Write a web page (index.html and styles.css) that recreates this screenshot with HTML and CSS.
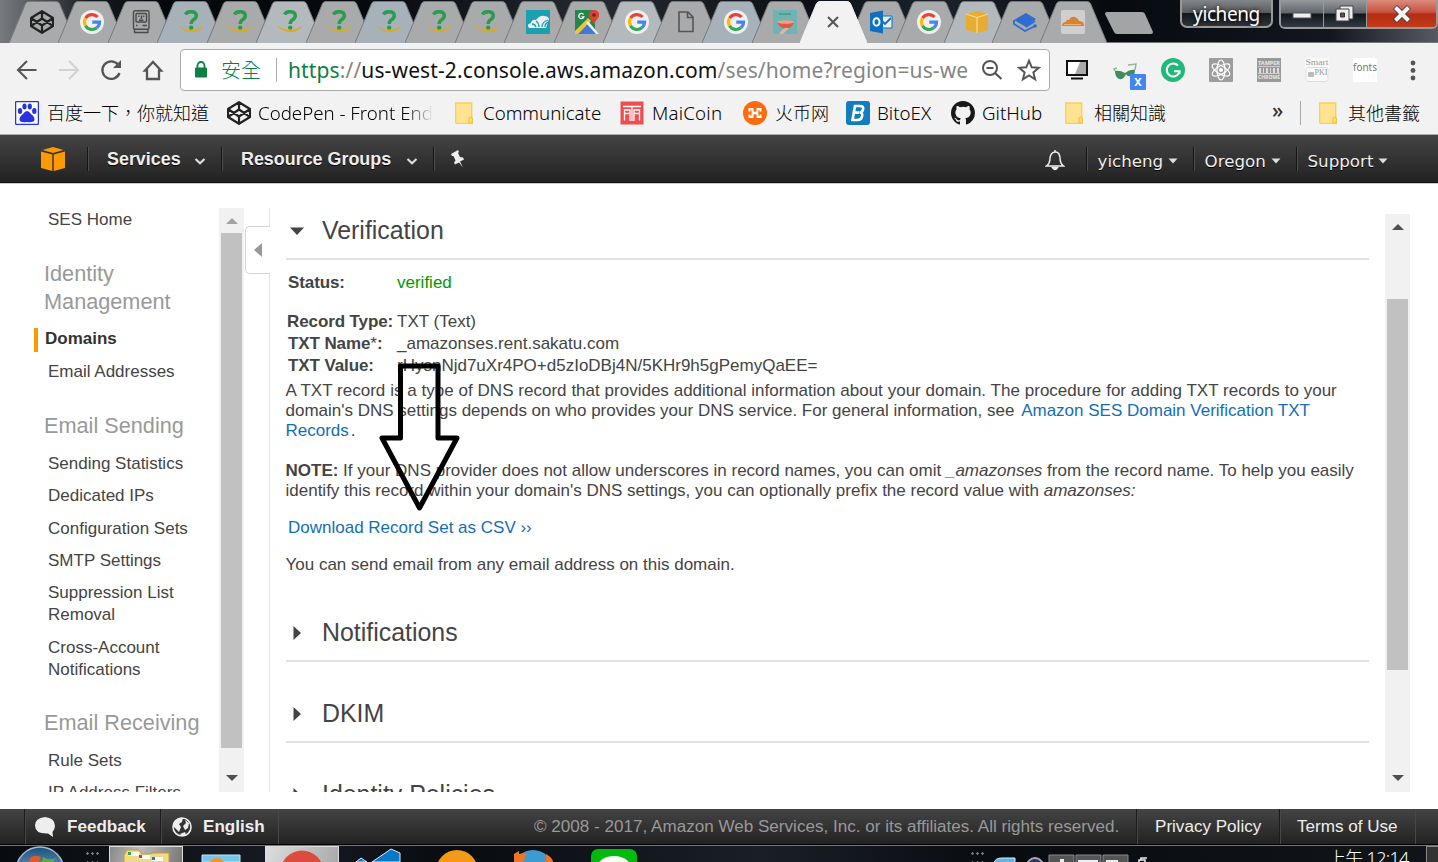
FILE: index.html
```html
<!DOCTYPE html>
<html lang="zh-Hant">
<head>
<meta charset="utf-8">
<title>SES Management Console</title>
<link rel="stylesheet" href="styles.css">
</head>
<body>
<svg class="defs" width="0" height="0">
  <symbol id="tab" viewBox="0 0 67 42"><path d="M0 42 L16.5 2.500 Q17.500 .5 20 .5 H47 Q49.500 .5 50.500 2.500 L67 42"/></symbol>
  <symbol id="codepen" viewBox="0 0 24 24"><path d="M12 1.200 23 8v8L12 22.800 1 16V8zM1 8 12 15.500 23 8M1 16 12 8.500 23 16M12 1.200v7.300M12 15.500v7.300" fill="none" stroke="#222" stroke-width="2.200" stroke-linejoin="round"/></symbol>
  <symbol id="google" viewBox="0 0 24 24"><circle cx="12" cy="12" r="12" fill="#f0f0f0"/><g fill="none" stroke-width="3.200"><path d="M17.600 7A7.600 7.600 0 0 0 5.500 8.200" stroke="#ea4335"/><path d="M5.500 8.200a7.600 7.600 0 0 0 0 7.600" stroke="#fbbc05"/><path d="M5.500 15.800a7.600 7.600 0 0 0 11.300 2" stroke="#34a853"/><path d="M16.800 17.800A7.600 7.600 0 0 0 19.500 12.200H12.300" stroke="#4285f4"/></g></symbol>
  <symbol id="question" viewBox="0 0 24 24"><path d="M6.500 4.500Q8 1.700 12 1.700q5.300 0 5.300 4 0 2.300-2.900 4.200Q12.200 11.400 12.200 14" fill="none" stroke="#2a9d4c" stroke-width="3.500"/><circle cx="12.200" cy="17.600" r="2.200" fill="#2a9d4c"/><path d="M.5 16.800q11 8 23 0-10 10-23 0z" fill="#e0aa14" stroke="#e0aa14"/></symbol>
  <symbol id="folder" viewBox="0 0 18 22"><path d="M.7 1h16v15.500l.7 1v3.800H1.500Q.7 21.300.7 20z" fill="#ffe390" stroke="#f7cf58" stroke-width="1.300"/><path d="M14 21v-5q1.500-2 3.300 0v5z" fill="#ffdf7a" stroke="#efbd32"/></symbol>
  <symbol id="mac" viewBox="0 0 24 24"><g fill="none" stroke="#4b4b4b" stroke-width="1.400"><rect x="4.500" y=".7" width="15.500" height="18.500" rx="1.500"/><path d="M5.500 19.200v3.300h13.500v-3.300"/><rect x="7" y="3.500" width="10.500" height="8.500" rx="1"/><path d="M9.800 5.500v1.500M14.700 5.500v1.500M12.500 5.500v2.800h-1M10 9.800q2.200 1 4.400 0M13.500 15.500h4.500M7 15.500h1.500"/></g></symbol>
  <symbol id="caret" viewBox="0 0 12 12"><path d="M1.500 4 6 8.200 10.500 4" fill="none" stroke="#ddd" stroke-width="2.200"/></symbol>
  <symbol id="drop" viewBox="0 0 10 8"><path d="M.5 1.500h9L5 6.500z" fill="#ddd"/></symbol>
  <symbol id="tri" viewBox="0 0 12 6"><path d="M0 6h12L6 0z"/></symbol>
</svg>

<header class="titlebar">
  <div class="tabs">
    <div class="tab"><svg class="shape"><use href="#tab"/></svg><svg class="fav"><use href="#codepen"/></svg></div>
    <div class="tab"><svg class="shape"><use href="#tab"/></svg><svg class="fav"><use href="#google"/></svg></div>
    <div class="tab"><svg class="shape"><use href="#tab"/></svg><svg class="fav"><use href="#mac"/></svg></div>
    <div class="tab tint"><svg class="shape"><use href="#tab"/></svg><svg class="fav"><use href="#question"/></svg></div>
    <div class="tab"><svg class="shape"><use href="#tab"/></svg><svg class="fav"><use href="#question"/></svg></div>
    <div class="tab pale"><svg class="shape"><use href="#tab"/></svg><svg class="fav"><use href="#question"/></svg></div>
    <div class="tab"><svg class="shape"><use href="#tab"/></svg><svg class="fav"><use href="#question"/></svg></div>
    <div class="tab tint"><svg class="shape"><use href="#tab"/></svg><svg class="fav"><use href="#question"/></svg></div>
    <div class="tab"><svg class="shape"><use href="#tab"/></svg><svg class="fav"><use href="#question"/></svg></div>
    <div class="tab"><svg class="shape"><use href="#tab"/></svg><svg class="fav"><use href="#question"/></svg></div>
    <div class="tab"><svg class="shape"><use href="#tab"/></svg><svg class="fav" viewBox="0 0 24 24"><path fill="#1ba0b2" d="M0 0h24v24H0z"/><path d="M3 18q-3-4 2-5 1-4 5-3 4-5 8-4 4 0 5 3l-3 9z" fill="#eee"/><path d="M10 17q-1-3-4-3M13 17q0-4-3-6M16 17q0-5 6-7M19 17q0-4 4-5" fill="none" stroke="#1ba0b2" stroke-width="1.300"/></svg></div>
    <div class="tab"><svg class="shape"><use href="#tab"/></svg><svg class="fav" viewBox="0 0 24 24"><path fill="#23864b" d="M0 0h20v24H0z"/><path d="M0 21 13 8l3 3L4 24H0z" fill="#e9c53b"/><path d="m3 24 10-10 8 10z" fill="#4478d8"/><path d="m13 11 11 13h-3L11 13z" fill="#eee"/><path d="M19 15q-1-4-4-7a5 5 0 1 1 8 0q-3 3-4 7z" fill="#d94332"/><circle cx="19" cy="5" r="1.800" fill="#7b2018"/><path d="M8.500 4.500a2.600 2.600 0 1 0 .3 2.500H6.500" fill="none" stroke="#fff" stroke-width="1.300"/></svg></div>
    <div class="tab pale"><svg class="shape"><use href="#tab"/></svg><svg class="fav"><use href="#google"/></svg></div>
    <div class="tab"><svg class="shape"><use href="#tab"/></svg><svg class="fav" viewBox="0 0 24 24"><path d="M5 2h9l5 5v14.500H5zM13.500 2v5.500H19" fill="none" stroke="#555" stroke-width="1.600"/></svg></div>
    <div class="tab tint"><svg class="shape"><use href="#tab"/></svg><svg class="fav"><use href="#google"/></svg></div>
    <div class="tab last"><svg class="shape"><use href="#tab"/></svg><svg class="fav" viewBox="0 0 24 24"><path fill="#70b3b4" d="M0 0h24v24H0z"/><path d="M6 4h12" stroke="#3b9c78" stroke-width="1.400"/><path d="M4 12h17q-2 6.500-8 6.500T4 12z" fill="#dd5941"/><ellipse cx="12.500" cy="12" rx="8.500" ry="1.800" fill="#eda08a"/><path d="m6 24 3-4 3-2h4l-6 6z" fill="#e2b598"/></svg></div>
    <div class="tab late active"><svg class="shape"><use href="#tab"/></svg><svg class="fav" viewBox="0 0 24 24"><path d="m7 7 10 10m0-10L7 17" stroke="#555" stroke-width="2"/></svg></div>
    <div class="tab late"><svg class="shape"><use href="#tab"/></svg><svg class="fav" viewBox="0 0 24 24"><path d="M11 6h12v12H11z" fill="#e8eef3" stroke="#0d70c0"/><path d="m13 11 3 3 6-6" fill="none" stroke="#0d70c0" stroke-width="1.800"/><path d="M1 3 14 .5v23L1 21z" fill="#0d70c0"/><ellipse cx="7.500" cy="12" rx="3" ry="3.800" fill="none" stroke="#fff" stroke-width="2"/></svg></div>
    <div class="tab late"><svg class="shape"><use href="#tab"/></svg><svg class="fav"><use href="#google"/></svg></div>
    <div class="tab late pale"><svg class="shape"><use href="#tab"/></svg><svg class="fav" viewBox="0 0 24 24"><path d="m1 4 11-3 11 3v16l-11 3-11-3z" fill="#e7ad32"/><path d="m1 4 11 3.500L23 4M12 7.500V23" fill="none" stroke="#f4d78c" stroke-width="1.300"/></svg></div>
    <div class="tab late"><svg class="shape"><use href="#tab"/></svg><svg class="fav" viewBox="0 0 24 24"><path d="m1 10 12-7 10 6-10 8z" fill="#2f6bd0"/><path d="M1 10v4l11 7 10-5M13 17l9-6" fill="none" stroke="#2f6bd0" stroke-width="1.800"/><circle cx="22" cy="16" r="1.800" fill="#2f6bd0"/></svg></div>
    <div class="tab late"><svg class="shape"><use href="#tab"/></svg><svg class="fav" viewBox="0 0 24 24"><rect width="24" height="24" rx="2" fill="#cfcfcf"/><path d="M1 16q0-4 4-4 0-3 3-2 2-4 6-3 3 1 4 4 5 0 5 5z" fill="#d9822f"/><path d="M3 14.500h17" stroke="#f3c08c" stroke-width=".8"/></svg></div>
    <svg class="newtab" viewBox="0 0 48 22"><path d="M2 0h35q2 0 3 2l8 18q0 2-2 2H12q-2 0-3-2L0 2q0-2 2-2z" fill="#a3a4a6"/></svg>
  </div>
  <div class="user">yicheng</div>
  <div class="controls">
    <div class="ctl"><svg width="20" height="10"><rect x="1" y="4" width="18" height="5" fill="#eee" stroke="#555"/></svg></div>
    <div class="ctl"><svg width="22" height="20"><path d="M6 2h13v13H6z" fill="#eee" stroke="#444"/><path d="M2 5h13v12H2z" fill="#eee" stroke="#444"/><path d="M6.500 9h4v4h-4z" fill="#555" stroke="#333"/></svg></div>
    <div class="ctl close"><svg width="20" height="18"><path d="m3 2 14 14M17 2 3 16" stroke="#534040" stroke-width="6"/><path d="m3.500 2.500 13 13M16.500 2.500l-13 13" stroke="#f4f4f4" stroke-width="4"/></svg></div>
  </div>
</header>

<div class="toolbar">
  <svg class="nav" viewBox="0 0 24 24"><path d="M21.500 12H3.500M12 3 3 12l9 9" fill="none" stroke="#555" stroke-width="2.100"/></svg>
  <svg class="nav" viewBox="0 0 24 24"><path d="M2 12h18M12 3l9 9-9 9" fill="none" stroke="#d2d2d2" stroke-width="2.100"/></svg>
  <svg class="nav" viewBox="0 0 24 24"><path d="M19 6.500A8.800 8.800 0 1 0 20.500 15" fill="none" stroke="#555" stroke-width="2.300"/><path d="M22 2v8h-8z" fill="#555"/></svg>
  <svg class="nav" viewBox="0 0 24 24"><path d="M4 12.500 12 4l8 8.500h-2v8.500H6v-8.500z" fill="none" stroke="#555" stroke-width="2.300"/></svg>
  <div class="omnibox">
    <svg class="lock" viewBox="0 0 14 17"><path d="M3.500 8V4.500a3.500 3.500 0 0 1 7 0V8" fill="none" stroke="#0b8043" stroke-width="1.800"/><rect x="1" y="6.500" width="12" height="10" rx="1" fill="#0b8043"/></svg>
    <span class="secure">安全</span>
    <span class="url"><span class="scheme">https</span>://<span class="host">us-west-2.console.aws.amazon.com</span>/ses/home?region=us-we</span>
    <svg class="zoomout" viewBox="0 0 22 22"><circle cx="9" cy="9" r="7" fill="none" stroke="#555" stroke-width="2"/><path d="m14 14 6.500 6M5.500 9h7" stroke="#555" stroke-width="2.200"/></svg>
    <svg class="star" viewBox="0 0 22 22"><path d="m11 2.500 2.500 6 6.500.5-5 4.200 1.600 6.300L11 16l-5.600 3.500L7 13.200 2 9l6.500-.5z" fill="none" stroke="#555" stroke-width="1.800"/></svg>
  </div>
  <div class="extensions">
    <svg viewBox="0 0 24 24"><path d="M2 3h20v14H2z" fill="#fff" stroke="#111" stroke-width="2"/><path d="m15 4-5 12h11V4z" fill="#aaa"/><path d="M6 20.500h12" stroke="#111" stroke-width="2"/></svg>
    <svg class="glasses" viewBox="0 0 34 32"><path d="M2 13q5-1 10 2 5-4 10-3 0 6-4 6-4 1-5-2-2 6-7 5-4-2-4-8z" fill="#418b5c"/><path d="m2 13-1-2 3-1M22 12l1-6-8 1" fill="none" stroke="#8eb79b" stroke-width="1.500"/><rect x="17" y="16" width="16" height="16" rx="1" fill="#4285f4"/><text x="25" y="28" class="badge">X</text></svg>
    <svg viewBox="0 0 24 24"><circle cx="12" cy="12" r="12" fill="#1fb978"/><path d="M17 7.500a6.500 6.500 0 1 0 1 7.500M13 13.200h5.500V16" fill="none" stroke="#fff" stroke-width="2.100"/></svg>
    <svg viewBox="0 0 24 24"><rect width="24" height="24" rx="1" fill="#9d9d9d"/><g fill="none" stroke="#fff" stroke-width="1.200"><ellipse cx="12" cy="12" rx="4" ry="10"/><ellipse cx="12" cy="12" rx="4" ry="10" transform="rotate(60 12 12)"/><ellipse cx="12" cy="12" rx="4" ry="10" transform="rotate(120 12 12)"/></g><circle cx="12" cy="12" r="2" fill="#fff"/></svg>
    <svg viewBox="0 0 24 24"><path fill="#999" d="M0 0h24v24H0z"/><path d="M1 8.500h22M1 15.500h22" stroke="#ddd" stroke-width=".8"/><path d="M2 10h2v5H2zM6 10h1v5H6zM9 10h2v5H9zM13 10h1v5h-1zM16 10h2v5h-2zM20 10h2v5h-2z" fill="#ddd"/><text x="12" y="7" class="micro" textLength="22" lengthAdjust="spacingAndGlyphs">TAMPER</text><text x="12" y="20.500" class="micro" textLength="22" lengthAdjust="spacingAndGlyphs">CHROME</text></svg>
    <svg viewBox="0 0 24 24"><path fill="#fafafa" d="M0 0h24v24H0z"/><text x="12" y="6.500" class="smart" textLength="23" lengthAdjust="spacingAndGlyphs">Smart</text><rect x="1" y="9.500" width="22" height="14" rx="2" fill="none" stroke="#ddd"/><rect x="3" y="14" width="6" height="5" rx="1" fill="#bbb"/><text x="16" y="17" class="smart" textLength="13" lengthAdjust="spacingAndGlyphs">PKI</text></svg>
    <svg viewBox="0 0 24 24"><path fill="#fff" d="M0 0h24v24H0z"/><text x="12" y="13" class="fonts" textLength="24">fonts</text></svg>
    <svg viewBox="0 0 24 24"><g fill="#555"><circle cx="12" cy="5" r="2.400"/><circle cx="12" cy="12.500" r="2.400"/><circle cx="12" cy="20" r="2.400"/></g></svg>
  </div>
</div>

<nav class="bookmarks">
  <a class="bm b1"><svg viewBox="0 0 24 24"><rect x=".6" y=".6" width="22.800" height="22.800" rx="1" fill="#fff" stroke="#2932e1" stroke-width="1.300"/><g fill="#2932e1"><ellipse cx="5" cy="10" rx="2.200" ry="3"/><ellipse cx="9.500" cy="5.500" rx="2.100" ry="3"/><ellipse cx="14.800" cy="5.500" rx="2.100" ry="3"/><ellipse cx="19.300" cy="10" rx="2.200" ry="3"/><path d="M12 10q2 0 4 3 4 3 3.500 6-1 3-7.500 2-6.500 1-7.500-2-.5-3 3.500-6 2-3 4-3z"/></g></svg><span>百度一下，你就知道</span></a>
  <a class="bm b2"><svg viewBox="0 0 24 24"><use href="#codepen"/></svg><span>CodePen - Front End</span></a>
  <a class="bm b3"><svg class="fold"><use href="#folder"/></svg><span>Communicate</span></a>
  <a class="bm b4"><svg viewBox="0 0 24 24"><path fill="#ee4e50" d="M.5.500h23v23H.5z"/><path d="M3 5.500h18M4.500 19.500V9h5.500v3.500H4.500M14 20V9h5.500v10.500M14 12.500h5.500M10 9v11M12 5.500V20" fill="none" stroke="#fff" stroke-width="1.300"/></svg><span>MaiCoin</span></a>
  <a class="bm b5"><svg viewBox="0 0 24 24"><circle cx="12" cy="12" r="12" fill="#ff6a0d"/><path d="M5.500 8h4v3l2.500 1 2.500-1V8h4M5.500 16h4v-3l2.500-1 2.500 1v3h4M6.500 8v2.500M17.500 8v2.500M6.500 16v-2.500M17.500 16v-2.500" fill="none" stroke="#fff" stroke-width="1.900"/></svg><span>火币网</span></a>
  <a class="bm b6"><svg viewBox="0 0 24 24"><rect width="24" height="24" rx="3" fill="#117dbd"/><path d="M9 5h5q4 0 3 3.500-.5 2.500-3 3 3 .5 2 4-.8 3.500-4.500 3.500H6.500zM8.800 11.700h4.500" fill="none" stroke="#fff" stroke-width="2.700"/></svg><span>BitoEX</span></a>
  <a class="bm b7"><svg viewBox="0 0 16 16"><path fill="#191717" d="M8 0C3.580 0 0 3.580 0 8c0 3.540 2.290 6.530 5.470 7.590.4.070.55-.17.55-.38 0-.19-.01-.82-.01-1.490-2.010.37-2.530-.49-2.690-.94-.09-.23-.48-.94-.82-1.130-.28-.15-.68-.52-.01-.53.63-.01 1.080.58 1.230.82.72 1.210 1.870.87 2.330.66.070-.52.280-.87.510-1.070-1.780-.2-3.640-.89-3.640-3.950 0-.87.310-1.590.82-2.150-.08-.2-.36-1.020.08-2.120 0 0 .67-.21 2.200.82a7.600 7.600 0 0 1 4 0c1.530-1.040 2.200-.82 2.200-.82.44 1.100.16 1.920.08 2.120.51.56.82 1.270.82 2.150 0 3.070-1.870 3.750-3.650 3.950.29.25.54.73.54 1.480 0 1.070-.01 1.930-.01 2.200 0 .21.15.46.55.38A8 8 0 0 0 16 8c0-4.420-3.580-8-8-8z"/></svg><span>GitHub</span></a>
  <a class="bm b8"><svg class="fold"><use href="#folder"/></svg><span>相關知識</span></a>
  <span class="more">»</span>
  <a class="bm b9"><svg class="fold"><use href="#folder"/></svg><span>其他書籤</span></a>
</nav>

<div class="awsnav">
  <div class="seg cube"><svg width="26" height="26" viewBox="0 0 26 26"><path d="M1 5.500 12.300 8.500V25L1 22zM25 5.500 13.700 8.500V25L25 22zM2.500 4 13 1l10.500 3L13 7z" fill="#f90"/></svg></div>
  <div class="seg services">Services<svg class="caret"><use href="#caret"/></svg></div>
  <div class="seg groups">Resource Groups<svg class="caret"><use href="#caret"/></svg></div>
  <div class="seg pin"><svg width="16" height="18" viewBox="0 0 16 18"><path d="m1 4 7-4 1 2-1 1 2 4 3 .5 1 2-4 2 3 6-4-5-4 2-1-2 1.500-2L3.500 6 2 6z" fill="#eee"/></svg></div>
  <div class="right">
    <svg class="bell" viewBox="0 0 20 22"><path d="M1.500 17q3-2 3.300-6Q5 3.500 10 3t5.200 8q.3 4 3.300 6z" fill="none" stroke="#eee" stroke-width="1.500"/><path d="M10 1v2M7.500 18.500h5q-2.500 4-5 0z" stroke="#eee" stroke-width="1.500" fill="#eee"/></svg>
    <div class="item i1">yicheng<svg class="drop"><use href="#drop"/></svg></div>
    <div class="item i2">Oregon<svg class="drop"><use href="#drop"/></svg></div>
    <div class="item i3">Support<svg class="drop"><use href="#drop"/></svg></div>
  </div>
</div>

<div class="page">
  <aside class="sidebar">
    <a class="link">SES Home</a>
    <h2>Identity<br>Management</h2>
    <a class="link current">Domains</a>
    <a class="link">Email Addresses</a>
    <h2>Email Sending</h2>
    <a class="link">Sending Statistics</a>
    <a class="link">Dedicated IPs</a>
    <a class="link">Configuration Sets</a>
    <a class="link">SMTP Settings</a>
    <a class="link two">Suppression List<br>Removal</a>
    <a class="link two">Cross-Account<br>Notifications</a>
    <h2 class="recv">Email Receiving</h2>
    <a class="link">Rule Sets</a>
    <a class="link">IP Address Filters</a>
  </aside>
  <div class="scroll side"><svg class="up dim"><use href="#tri"/></svg><div class="thumb"></div><svg class="down"><use href="#tri"/></svg></div>
  <div class="gutter"><div class="collapse"><svg width="8" height="14"><path d="M8 0v14L0 7z" fill="#999"/></svg></div></div>
  <main class="main">
    <h1><svg class="tw" viewBox="0 0 14 14"><path d="M0 3.500h14L7 11z"/></svg>Verification</h1>
    <dl class="status"><dt>Status:</dt><dd class="ok">verified</dd></dl>
    <dl class="records">
      <dt class="rt">Record Type:</dt><dd>TXT (Text)</dd>
      <dt>TXT Name<i>*</i>:</dt><dd>_amazonses.rent.sakatu.com</dd>
      <dt>TXT Value:</dt><dd class="value">rHysnNjd7uXr4PO+d5zIoDBj4N/5KHr9h5gPemyQaEE=</dd>
    </dl>
    <p><span class="wide">A TXT record is a type of DNS record that provides additional information about your domain. The procedure for adding TXT records to your</span><br>domain's DNS settings depends on who provides your DNS service. For general information, see <a class="guide">Amazon SES Domain Verification TXT</a><br><a>Records</a><span class="stop">.</span></p>
    <p class="note"><b>NOTE:</b> If your DNS provider does not allow underscores in record names, you can omit <em>_amazonses</em> from the record name. To help you easily<br>identify this record within your domain's DNS settings, you can optionally prefix the record value with <em>amazonses:</em></p>
    <p class="download"><a>Download Record Set as CSV ››</a></p>
    <p class="send">You can send email from any email address on this domain.</p>
    <h1 class="sec"><svg class="tw" viewBox="0 0 14 14"><path d="M3.500 0v14L11 7z"/></svg>Notifications</h1>
    <h1 class="sec dkim"><svg class="tw" viewBox="0 0 14 14"><path d="M3.500 0v14L11 7z"/></svg>DKIM</h1>
    <h1 class="sec pol"><svg class="tw" viewBox="0 0 14 14"><path d="M3.500 0v14L11 7z"/></svg>Identity Policies</h1>
  </main>
  <div class="scroll body"><svg class="up"><use href="#tri"/></svg><div class="thumb"></div><svg class="down"><use href="#tri"/></svg></div>
  <svg class="arrow" viewBox="0 0 84 152"><path d="M22.500 5H60v72h19L41.500 147 4 77h18.500z" fill="none" stroke="#000" stroke-width="5" stroke-linejoin="round"/></svg>
</div>

<footer class="footer">
  <div class="fseg fb"><svg width="22" height="22" viewBox="0 0 22 22"><path d="M11 1q10 1 10 9 0 3-2.500 6l.5 5-5-3.500Q1 18 1 9.500 1 2 11 1z" fill="#eee"/></svg>Feedback</div>
  <div class="fseg lang"><svg width="20" height="20" viewBox="0 0 20 20"><circle cx="10" cy="10" r="9" fill="#333" stroke="#eee" stroke-width="1.600"/><path d="M2 5q4-5 9-4l-1 4-3 2 2 3-2 5-4-4-2-2zM13 3l4 3-1 5-3 2-2-4 3-3zM8 17l5-2 1 3-4 1z" fill="#eee"/></svg>English</div>
  <span class="copy">© 2008 - 2017, Amazon Web Services, Inc. or its affiliates. All rights reserved.</span>
  <div class="fseg privacy">Privacy Policy</div>
  <div class="fseg terms">Terms of Use</div>
</footer>

<div class="taskbar">
  <svg class="start" viewBox="0 0 50 16"><defs><linearGradient id="orb" x2="0" y2="1"><stop stop-color="#1a5080"/><stop offset="1" stop-color="#b3d8ea"/></linearGradient></defs><circle cx="25" cy="25" r="24" fill="url(#orb)" stroke="#a6bac8" stroke-width="1.500"/><path d="M14 16q1-9 12-5l-2 5z" fill="#e05a28"/><path d="m28 11q6 4 13 1l-3 4H27z" fill="#65a83a"/></svg>
  <span class="grip"></span>
  <div class="task lit"><svg viewBox="0 0 50 16"><path d="M3 16V8l3-5h12l3 4h8l3-1h16v10z" fill="#f2d98a" stroke="#c49d3b"/><path d="M7 5h11v4H7zM18 8h11v4H18zM31 10h11v4H31z" fill="#fff"/><path d="M7 5h3v3H7z" fill="#3a3"/><path d="M18 8h3v3h-3z" fill="#d32"/><path d="M31 10h3v3h-3z" fill="#27c"/></svg></div>
  <div class="task"><svg viewBox="0 0 50 16"><path d="M5 9h38v7H5z" fill="#79c5e6" stroke="#bce8f7"/><circle cx="20" cy="20" r="8" fill="#f29428"/></svg></div>
  <div class="task lit strong"><svg viewBox="0 0 50 16"><circle cx="25" cy="25" r="21.500" fill="#dd4b3e"/></svg></div>
  <div class="task"><svg viewBox="0 0 50 16"><path d="m3 16 5-4 6 4zM19 16 38 3l9 4v9z" fill="#0878c9" stroke="#dbeaf6"/></svg></div>
  <div class="task later"><svg viewBox="0 0 50 16"><circle cx="25" cy="25" r="21" fill="#f39a17"/></svg></div>
  <div class="task"><svg viewBox="0 0 50 16"><circle cx="25" cy="24" r="20" fill="#3c9bd0"/><path d="M6 16V8l5-3v3l8-1-4 9zM38 8q7 4 7 8h-7z" fill="#ec7729"/></svg></div>
  <div class="task line"><svg viewBox="0 0 50 16"><rect x="2" y="3" width="46" height="30" rx="7" fill="#00bb0b"/><ellipse cx="25" cy="24" rx="18" ry="14" fill="#fff"/></svg></div>
  <div class="tray">
    <span class="grip"></span>
    <svg width="154" height="17" viewBox="0 0 154 17"><path d="M0 17q1-5 8-5h13v5z" fill="#5ab6ef" stroke="#d9f1ff"/><circle cx="41" cy="20" r="8" fill="#2c3470" stroke="#aaa" stroke-width="2"/><g fill="#555" stroke="#888"><path d="M55 9h25v9H55zM82 9h25v9H82zM109 9h25v9h-25z"/></g><path d="M66 13h4v4h-4zM84 14h20v3H84zM112 14h12v3h-12z" fill="#eee"/><path d="M145 17v-3h6v3M147 14v-2h6" fill="none" stroke="#eee" stroke-width="1.500"/></svg>
    <span class="clock">上午 12:14</span>
    <span class="peek"></span>
  </div>
</div>
</body>
</html>
```
FILE: styles.css
```css
* { box-sizing: border-box; }
body { margin: 0; width: 1438px; height: 862px; overflow: hidden; background: #fff; color: #444; font-family: "Liberation Sans", Arial, sans-serif; display: flex; flex-direction: column; }
svg { display: block; flex: none; }
.defs { position: absolute; }
h1, h2, p, dl, dd { margin: 0; font-weight: normal; }

/* browser title bar */
.titlebar { height: 43px; flex: none; display: flex; align-items: flex-start; background: linear-gradient(90deg, #777b7f 0, #4b4f52 45px, #171a1f 90px, #05080d 160px, #06090e 370px, #242a30 600px, #0b1016 800px, #1b222a 940px, #070b10 1110px, #11171d 1330px, #555b60 1438px); border-bottom: 1px solid #777; }
.tabs { display: flex; width: 1180px; padding: 1px 0 0 8.500px; }
.tab { width: 67px; height: 42px; margin-right: -17.450px; flex: none; display: grid; place-items: center; }
.tab > svg { grid-area: 1 / 1; }
.tab.last, .tab.late { margin-right: -19px; }
.shape { width: 67px; height: 42px; fill: #a9aaab; stroke: #77797b; stroke-width: 1px; }
.tint .shape { fill: #a7b1ba; }
.pale .shape { fill: #b4b9bd; }
.active { z-index: 2; }
.active .shape { fill: #f2f2f2; stroke: #f2f2f2; }
.fav { width: 24px; height: 24px; }
.newtab { width: 48px; height: 22px; margin: 11px 0 0 17px; }
.user { width: 93px; height: 28px; border: 2px solid #999; border-top: 0; border-radius: 0 0 7px 7px; background: linear-gradient(#81868a, #5a5c5f 48%, #15181b 52%, #303338); color: #fff; font: 19px/29px "Noto Sans", sans-serif; letter-spacing: -.4px; text-align: center; text-shadow: 0 0 4px #000; }
.controls { display: flex; margin-left: 6px; width: 159px; height: 29px; border: 2px solid #999; border-top: 0; border-radius: 0 0 6px 6px; overflow: hidden; }
.ctl { width: 43px; border-right: 1px solid #999; display: grid; place-items: center; background: linear-gradient(#969a9d, #60656a 48%, #11161c 52%, #343a42); }
.close { flex: 1; border: 0; background: linear-gradient(#dc8b7c, #c9523f 45%, #b42c14 52%, #c33b18); }

/* address bar */
.toolbar { height: 54px; flex: none; background: #f2f2f2; display: flex; align-items: center; padding: 0 13px 1px 15px; }
.nav { width: 24px; height: 24px; margin-right: 18px; }
.omnibox { width: 870px; height: 42px; margin-left: -3px; border: 1px solid #aaa; border-radius: 4px; background: #fff; display: flex; align-items: center; padding-left: 13px; font-family: "Noto Sans", "Noto Sans CJK TC", sans-serif; font-size: 21px; white-space: nowrap; }
.lock { width: 14px; height: 17px; }
.secure { margin-left: 13px; width: 56px; height: 24px; line-height: 24px; border-right: 1px solid #aaa; color: #0b8043; font-family: "Noto Sans CJK TC", sans-serif; font-weight: 300; font-size: 20px; }
.url { margin-left: 11px; width: 681px; overflow: hidden; color: #858585; letter-spacing: .12px; }
.scheme { color: #0b8043; }
.host { color: #111; }
.zoomout { width: 22px; height: 22px; margin-left: 12px; }
.star { width: 24px; height: 24px; margin-left: 14px; }
.extensions { margin-left: 15px; display: flex; gap: 24px; align-items: center; }
.extensions > svg { width: 24px; height: 24px; }
.extensions > .glasses { width: 34px; height: 32px; margin: 8px -10px 0 0; }
.extensions text { text-anchor: middle; fill: #fff; font-family: "Noto Sans", sans-serif; }
.extensions .badge { font-size: 11px; font-weight: bold; }
.extensions .micro { font-size: 6px; font-weight: bold; fill: #e8e8e8; }
.extensions .smart { font: 8px "Liberation Serif", serif; fill: #999; }
.extensions .fonts { font-size: 10px; fill: #777; }

/* bookmarks */
.bookmarks { height: 38px; flex: none; background: #f2f2f2; border-bottom: 1px solid #aaa; display: flex; align-items: flex-start; padding: 4px 0 0 15px; font: 300 18.700px/24px "Noto Sans", "Noto Sans CJK TC", sans-serif; color: #000; white-space: nowrap; }
.bm { display: flex; }
.bm > svg { width: 24px; height: 24px; margin-right: 8px; }
.bm > svg.fold { width: 18px; height: 22px; margin: 1px 11px 0 0; }
.b1 { width: 212px; }
.b1 span, .b5 span, .b8 span, .b9 span { font-family: "Noto Sans CJK TC", sans-serif; font-size: 18px; line-height: 22px; }
.b2 { width: 228px; }
.bm.b2 > svg, .bm.b3 > svg { margin-right: 7px; }
.bm.b3 > svg { margin-right: 10px; }
.b2 span { width: 175px; overflow: hidden; -webkit-mask: linear-gradient(90deg, #000 84%, transparent); mask: linear-gradient(90deg, #000 84%, transparent); }
.b3 { width: 165px; }
.b4 { width: 123px; letter-spacing: .2px; }
.b5 { width: 103px; }
.b6 { width: 105px; }
.b7 { width: 114px; }
.bm.b7 > svg, .bm.b6 > svg { margin-right: 7px; }
.b8 { width: 207px; }
.more { width: 28px; font-size: 21px; line-height: 19px; font-weight: 500; color: #333; }
.b9 { height: 24px; border-left: 1px solid #aaa; padding-left: 18px; }

/* console navigation */
.awsnav { height: 48px; flex: none; background: linear-gradient(#444, #222); border-bottom: 1px solid #111; box-shadow: 0 1px 0 #ccc; display: flex; align-items: flex-start; padding-top: 12px; color: #eee; font-size: 17.900px; }
.seg { height: 24px; display: flex; align-items: center; border-right: 1px solid #151515; box-shadow: 1px 0 0 #4d4d4d; font-weight: bold; line-height: 24px; text-shadow: 0 1px 0 #000; white-space: nowrap; }
.cube { width: 88px; padding-left: 40px; }
.services { width: 134px; padding-left: 19px; }
.groups { width: 212px; padding-left: 19px; }
.pin { border: 0; box-shadow: none; padding-left: 16px; }
.caret { width: 12px; height: 12px; margin: 3px 15px 0 auto; }
.right { margin-left: auto; width: 393px; display: flex; font: 16.700px/29px "DejaVu Sans", sans-serif; }
.bell { width: 20px; height: 22px; margin: 2px 21px 0 0; }
.item { height: 24px; display: flex; border-left: 1px solid #151515; box-shadow: inset 1px 0 0 #4d4d4d; padding-left: 10.500px; text-shadow: 0 1px 0 #000; }
.i1 { width: 107px; }
.i2 { width: 103px; }
.drop { width: 10px; height: 8px; margin: 10px 0 0 5px; }

/* page */
.page { position: relative; height: 626px; flex: none; display: flex; padding-top: 25px; font-size: 17px; white-space: nowrap; }
.sidebar { width: 219px; height: 584px; overflow: hidden; padding-top: 1px; }
.link { display: block; padding-left: 48px; line-height: 22px; margin-bottom: 10.300px; }
.sidebar h2 { font-size: 21.700px; line-height: 28px; padding-left: 44px; color: #999; margin: 29px 0 13px; }
.sidebar > .link:first-child { margin-bottom: 0; }
.current { font-weight: bold; border-left: 4px solid #f90; margin-left: 34px; padding-left: 7px; height: 24px; line-height: 21px; margin-top: -1px; margin-bottom: 9px; color: #333; }
.sidebar .two { margin-bottom: 11px; }
.sidebar .recv { margin-top: 28px; }
.scroll { width: 25px; background: #f1f1f1; display: flex; flex-direction: column; align-items: center; flex: none; }
.side { height: 584px; }
.scroll .thumb { width: 21px; background: #c1c1c1; }
.scroll svg { width: 12px; height: 6px; fill: #505050; }
.scroll .dim { fill: #a3a3a3; }
.up { margin: 10px 0 9px; }
.down { transform: scaleY(-1); margin: auto 0 11px; }
.side .thumb { height: 515px; }
.gutter { width: 26px; height: 584px; border-right: 1px solid #e4e4e4; }
.collapse { width: 25px; height: 48px; margin: 18px 0 0 1px; border: 1px solid #d4d4d4; border-right: 0; border-radius: 5px 0 0 5px; background: #fff; display: grid; place-items: center; }
.main { width: 1115px; height: 584px; overflow: hidden; padding: 0 15px 0 16px; }
.main h1 { height: 52px; margin-right: 1px; border-bottom: 2px solid #e2e2e2; font-size: 24.900px; line-height: 44px; display: flex; }
.tw { width: 14px; height: 14px; margin: 16px 18px 0 4px; fill: #444; }
.main dl { display: grid; grid-template-columns: 110px 1fr; grid-auto-rows: 22px; align-content: start; line-height: 22px; padding-left: 2px; }
dt { font-weight: bold; letter-spacing: -.1px; }
dd { margin-left: -1px; }
.rt { margin-left: -1px; }
dt i { font-weight: normal; font-style: normal; }
.status { padding-top: 12px; height: 51px; }
.records { height: 70px; }
.ok { color: #090; }
.main p { line-height: 20px; margin-left: -.5px; }
.main a { color: #146eb4; }
.wide { word-spacing: .13px; }
.main .guide { margin-left: 2px; }
.stop { margin-left: 2px; }
.main .note { margin-top: 20px; }
.main .download { margin: 17px 0; padding-left: 2px; }
.main .sec { margin-top: 36px; height: 51px; line-height: 42px; }
.main .sec .tw { margin-top: 15px; }
.main .dkim, .main .pol { margin-top: 30px; }
.body { height: 578px; margin-top: 6px; }
.body .thumb { height: 371px; margin-top: 60px; }
.arrow { position: absolute; left: 378px; top: 178px; width: 84px; height: 152px; }

/* console footer */
.footer { height: 36px; flex: none; background: linear-gradient(#444, #222); border-bottom: 1px solid #000; display: flex; align-items: stretch; line-height: 35px; font-size: 17.080px; color: #eee; white-space: nowrap; }
.fseg { display: flex; align-items: center; border-left: 1px solid #1b1b1b; box-shadow: inset 1px 0 0 #484848; }
.fb { width: 136px; margin-left: 24px; padding-left: 9px; gap: 11px; font-weight: bold; }
.lang { width: 119px; border-right: 1px solid #484848; padding-left: 11px; gap: 11px; font-weight: bold; }
.copy { width: 602px; margin-left: 255px; color: #999; }
.privacy { width: 143px; padding-left: 18px; }
.terms { width: 137px; padding-left: 17px; border-right: 1px solid #484848; }

/* desktop taskbar */
.taskbar { height: 17px; flex: none; overflow: hidden; border-top: 1px solid #777; background: linear-gradient(90deg, #080b0f, #171b22 300px, #080b0f 450px, #1a1f27 760px, #080b0f 1000px, #11151a); display: flex; }
.start { width: 50px; height: 16px; margin-left: 15px; }
.grip { width: 14px; height: 16px; margin-left: 20px; background: radial-gradient(circle, #777 1px, transparent 1.500px) 0 3px / 5px 9px; }
.task { width: 75px; height: 16px; margin-left: 1px; display: flex; justify-content: center; }
.task svg { width: 50px; height: 16px; }
.lit { width: 74px; margin-left: 10px; background: linear-gradient(110deg, #888, #bbb 40%, #777); border: 1px solid #ddd; border-bottom: 0; }
.task + .lit { margin-left: 6px; }
.later { margin-left: 4px; }
.line { margin-left: 6px; }
.strong { background: linear-gradient(110deg, #ddd, #aaa); }
.tray { margin-left: auto; display: flex; height: 16px; }
.tray .grip { margin: 0 10px 0 0; }
.clock { width: 93px; margin-left: 180px; color: #fff; font: 300 18px/24px "Noto Sans", "Noto Sans CJK TC", sans-serif; letter-spacing: -.7px; white-space: nowrap; }
.peek { width: 12px; margin-left: 5px; border-left: 1px solid #888; border-top: 1px solid #888; background: #333; }
```
